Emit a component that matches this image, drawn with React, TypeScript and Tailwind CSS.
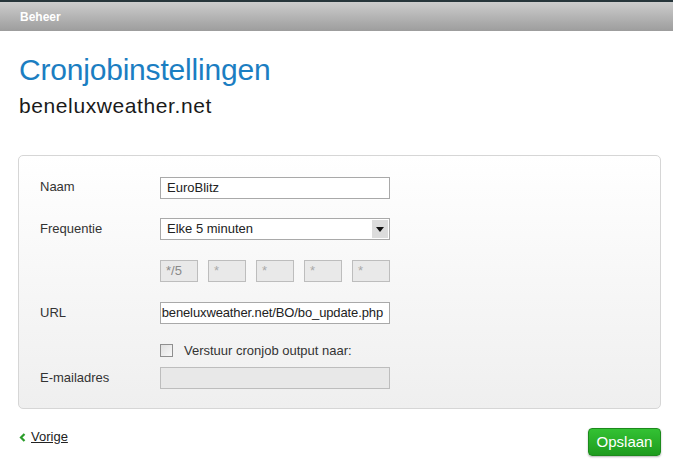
import React from 'react';

const font = "font-['Liberation_Sans',Arial,sans-serif]";

const Row: React.FC<{ label?: string; children: React.ReactNode; className?: string }> = ({ label, children, className }) => (
  <div className={`flex items-center h-[22px] ${className ?? ''}`}>
    <div className="w-[120px] text-[13px] text-[#333]">{label}</div>
    <div className="w-[230px]">{children}</div>
  </div>
);

const inputCls = 'w-full h-[22px] border border-[#a9a9a9] bg-white px-[6px] text-[13px] text-[#222] leading-[20px] outline-none';

export default function App() {
  return (
    <div className={`w-[673px] h-[464px] bg-white ${font} overflow-hidden`}>
      <div className="h-[31px] border-t-2 border-[#27363b] bg-gradient-to-b from-[#cdcdcd] to-[#9d9d9d] flex items-center px-[20px]">
        <span className="text-white font-bold text-[12px]">Beheer</span>
      </div>

      <div className="pl-[18px] pr-[12px]">
        <h1 className="mt-[22px] text-[30px] leading-[34px] text-[#1b7ec2] tracking-[-0.2px] pl-[1px]">Cronjobinstellingen</h1>
        <h2 className="mt-[7px] text-[21px] leading-[24px] text-[#1a1a1a] tracking-[0.6px] pl-[1px]">beneluxweather.net</h2>

        <div className="mt-[37px] h-[254px] rounded-[5px] border border-[#d6d6d6] bg-gradient-to-b from-white to-[#efefef] pl-[21px] pt-[20px]">
          <Row label="Naam">
            <input className={inputCls} defaultValue="EuroBlitz" />
          </Row>
          <Row label="Frequentie" className="mt-[20px]">
            <div className="relative h-[22px] border border-[#a9a9a9] bg-white flex items-center px-[6px] text-[13px] text-[#222]">
              Elke 5 minuten
              <div className="absolute right-[1px] top-[1px] bottom-[1px] w-[16px] bg-[#dcdcdc] flex items-center justify-center">
                <svg width="8" height="5" viewBox="0 0 8 5"><path d="M0 0h8L4 5z" fill="#111" /></svg>
              </div>
            </div>
          </Row>
          <Row className="mt-[20px]">
            <div className="flex gap-[10px]">
              {['*/5', '*', '*', '*', '*'].map((v, i) => (
                <div key={i} className={`w-[38px] h-[22px] border border-[#bdbdbd] bg-[#e9e9e9] px-[5px] text-[13px] leading-[20px] ${i === 0 ? 'text-[#8a8a8a]' : 'text-[#aaa]'}`}>{v}</div>
              ))}
            </div>
          </Row>
          <Row label="URL" className="mt-[20px]">
            <div className="h-[22px] border border-[#a9a9a9] bg-white overflow-hidden flex justify-end pr-[6px] text-[13px] tracking-[-0.12px] text-[#222] leading-[20px] whitespace-nowrap">
              http://www.beneluxweather.net/BO/bo_update.php
            </div>
          </Row>
          <Row className="mt-[20px] !h-[13px]">
            <div className="flex items-center">
              <div className="w-[13px] h-[13px] border border-[#8f8f8f] bg-gradient-to-br from-[#e0e0e0] to-[#f8f8f8]" />
              <span className="ml-[11px] text-[13px] text-[#333]">Verstuur cronjob output naar:</span>
            </div>
          </Row>
          <Row label="E-mailadres" className="mt-[10px]">
            <div className="h-[22px] border border-[#bdbdbd] bg-[#e8e8e8]" />
          </Row>
        </div>

        <div className="flex justify-between mt-[19px]">
          <a className="flex items-center mt-[1px] h-[16px] text-[13px] text-[#222] underline">
            <svg width="7" height="9" viewBox="0 0 7 9" className="mr-[5px] ml-[1px]"><path d="M5.5 1L2 4.5 5.5 8" stroke="#2a9d2a" strokeWidth="2.2" fill="none" /></svg>
            Vorige
          </a>
          <button className="w-[73px] h-[28px] rounded-[4px] border border-[#1c8a1c] bg-gradient-to-b from-[#33c233] to-[#1e9c1e] text-white text-[15px] shadow-[0_1px_2px_rgba(0,0,0,0.3)]">Opslaan</button>
        </div>
      </div>
    </div>
  );
}
